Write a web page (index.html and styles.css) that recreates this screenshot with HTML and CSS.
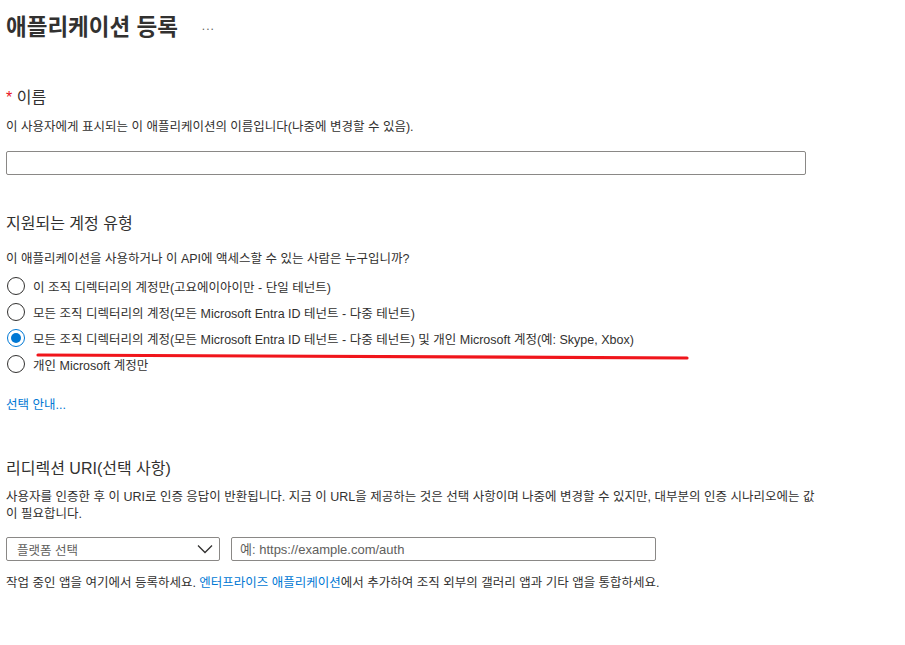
FILE: index.html
```html
<!DOCTYPE html>
<html lang="ko">
<head>
    <meta charset="UTF-8">
    <meta name="viewport" content="width=device-width, initial-scale=1.0">
    <title>애플리케이션 등록</title>
    <link rel="stylesheet" href="styles.css">
</head>
<body>
    <div class="breadcrumb">
        <span>홈</span> &gt; <a href="#">앱 등록</a> &gt;
    </div>
    <header class="page-header">
        <h1>애플리케이션 등록</h1>
        <span class="more">...</span>
    </header>

    <div class="container">
        <div class="section-title name-title"><span class="required">*</span> 이름</div>
        <p class="desc">이 사용자에게 표시되는 이 애플리케이션의 이름입니다(나중에 변경할 수 있음).</p>
        <input type="text" class="text-input name-input">

        <div class="section-title account-title">지원되는 계정 유형</div>
        <p class="desc question">이 애플리케이션을 사용하거나 이 API에 액세스할 수 있는 사람은 누구입니까?</p>

        <div class="radio-group">
            <label class="radio-row">
                <span class="radio"></span>
                이 조직 디렉터리의 계정만(고요에이아이만 - 단일 테넌트)
            </label>
            <label class="radio-row">
                <span class="radio"></span>
                모든 조직 디렉터리의 계정(모든 Microsoft Entra ID 테넌트 - 다중 테넌트)
            </label>
            <label class="radio-row">
                <span class="radio checked"></span>
                모든 조직 디렉터리의 계정(모든 Microsoft Entra ID 테넌트 - 다중 테넌트) 및 개인 Microsoft 계정(예: Skype, Xbox)
            </label>
            <label class="radio-row">
                <span class="radio"></span>
                개인 Microsoft 계정만
            </label>

            <!-- red pen mark under the chosen option -->
            <svg class="mark" width="660" height="10" viewBox="0 0 660 10">
                <path d="M2 3 Q 330 4 651 6" stroke="#f0151b" stroke-width="3.2" stroke-linecap="round" fill="none"/>
            </svg>
        </div>

        <a href="#" class="help-link">선택 안내...</a>

        <div class="section-title redirect-title">리디렉션 URI(선택 사항)</div>
        <p class="desc redirect-desc">사용자를 인증한 후 이 URI로 인증 응답이 반환됩니다. 지금 이 URL을 제공하는 것은 선택 사항이며 나중에 변경할 수 있지만, 대부분의 인증 시나리오에는 값<wbr>이 필요합니다.</p>

        <div class="uri-row">
            <div class="select">
                <span>플랫폼 선택</span>
                <svg width="16" height="10" viewBox="0 0 16 10">
                    <path d="M1 1.5 L8 8.5 L15 1.5" stroke="#323130" stroke-width="1.3" fill="none"/>
                </svg>
            </div>
            <input type="text" class="text-input uri-input" placeholder="예: https://example.com/auth">
        </div>

        <p class="desc footer-note">작업 중인 앱을 여기에서 등록하세요. <a href="#">엔터프라이즈 애플리케이션</a>에서 추가하여 조직 외부의 갤러리 앱과 기타 앱을 통합하세요.</p>
    </div>
</body>
</html>
```

FILE: styles.css
```css
body {
    font-family: "Liberation Sans", "Noto Sans CJK KR", sans-serif;
    color: #323130;
    margin: 0;
    padding: 0 6px;
    background-color: #fff;
}

a {
    color: #0078d4;
    text-decoration: none;
}

.breadcrumb {
    font-size: 13px;
    line-height: 16px;
    margin-top: -14px;
    padding-left: 20px;
    color: #a19f9d;
}

.page-header {
    display: flex;
    align-items: center;
    margin-top: 10px;
    height: 32px;
}

.page-header h1 {
    font-size: 22.5px;
    font-weight: bold;
    margin: 0;
    line-height: 32px;
}

.more {
    font-size: 12px;
    color: #605e5c;
    margin-left: 24px;
    margin-top: -4px;
    letter-spacing: 1px;
}

.container {
    width: 800px;
}

.section-title {
    font-size: 16px;
    line-height: 22px;
}

.required {
    color: #e81123;
}

.name-title {
    margin-top: 43px;
}

.desc {
    font-size: 12.5px;
    line-height: 18px;
    margin: 9px 0 0;
}

.text-input {
    display: block;
    box-sizing: border-box;
    height: 24px;
    border: 1px solid #8a8886;
    border-radius: 2px;
    padding: 0 8px;
    font-family: inherit;
    font-size: 13px;
    color: #323130;
}

.name-input {
    width: 800px;
    margin-top: 15px;
}

.account-title {
    margin-top: 38px;
}

.question {
    margin-top: 15px;
}

.radio-group {
    position: relative;
    margin-top: 5px;
}

.radio-row {
    display: flex;
    align-items: center;
    height: 26px;
    font-size: 12.5px;
    gap: 8px;
    margin-left: 1px;
}

.radio {
    width: 18px;
    height: 18px;
    box-sizing: border-box;
    border: 1px solid #323130;
    border-radius: 50%;
    display: flex;
    align-items: center;
    justify-content: center;
    flex-shrink: 0;
}

.radio.checked {
    border-color: #0078d4;
}

.radio.checked::after {
    content: "";
    width: 10px;
    height: 10px;
    border-radius: 50%;
    background-color: #0078d4;
}

.mark {
    position: absolute;
    left: 30px;
    top: 79px;
}

.help-link {
    display: block;
    font-size: 12.5px;
    line-height: 18px;
    margin-top: 19px;
}

.redirect-title {
    margin-top: 44px;
}

.redirect-desc {
    width: 818px;
    line-height: 17px;
    margin-top: 9px;
}

.uri-row {
    display: flex;
    gap: 11px;
    margin-top: 14px;
}

.select {
    box-sizing: border-box;
    width: 214px;
    height: 24px;
    border: 1px solid #8a8886;
    border-radius: 2px;
    display: flex;
    align-items: center;
    justify-content: space-between;
    padding: 0 6px 0 10px;
    font-size: 12.5px;
    color: #605e5c;
}

.uri-input {
    width: 425px;
}

.uri-input::placeholder {
    color: #605e5c;
}

.footer-note {
    margin-top: 13px;
}
```
